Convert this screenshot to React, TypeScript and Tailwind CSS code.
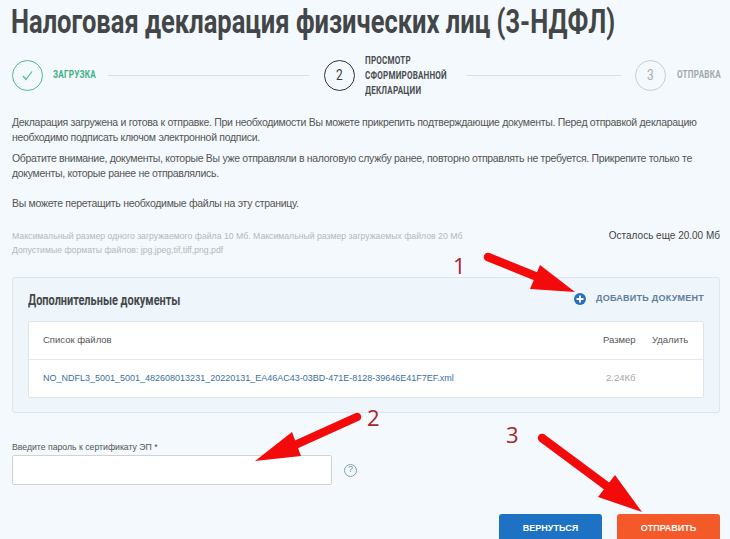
import React from "react";

const cond = "font-['Roboto',sans-serif] origin-left whitespace-nowrap";

function Arrow({ tail, neck, a, b, tip }: { tail: number[]; neck: number[]; a: number[]; b: number[]; tip: number[] }) {
  return (
    <g>
      <line x1={tail[0]} y1={tail[1]} x2={neck[0]} y2={neck[1]} stroke="#f30a0a" strokeWidth="8.5" strokeLinecap="round" />
      <polygon points={`${a[0]},${a[1]} ${tip[0]},${tip[1]} ${b[0]},${b[1]}`} fill="#f30a0a" />
    </g>
  );
}

export default function App() {
  return (
    <div className="relative w-[730px] h-[539px] overflow-hidden bg-[#f3f9fc] font-['Liberation_Sans',Arial,sans-serif] text-[#4b4b4b]">
      <div className="flex flex-col pl-3 pr-[10px]">
        <h1 className={`${cond} h-[44px] -ml-px text-[34px] leading-[42px] font-bold text-[#434648] scale-x-[0.75]`}>
          Налоговая декларация физических лиц (3-НДФЛ)
        </h1>

        <div className="mt-[13px] flex items-center h-[36px] uppercase text-[11px] font-bold">
          <div className="w-[31px] h-[31px] rounded-full border border-[#4fb98c] flex items-center justify-center shrink-0">
            <svg width="13" height="13" viewBox="0 0 13 13" fill="none" stroke="#4fb98c" strokeWidth="1.2"><path d="M2 7l3 3.5L11 2.5" /></svg>
          </div>
          <span className={`${cond} ml-[10px] w-[43px] shrink-0 text-[#3fb083] tracking-[0.3px] scale-x-[0.74]`}>Загрузка</span>
          <div className="ml-[12px] w-[201px] h-px shrink-0 bg-[#d6e0e6]" />
          <div className="ml-[15px] w-[31px] h-[31px] rounded-full border border-[#2e3236] flex items-center justify-center shrink-0 text-[14px] font-normal text-[#3a3d40]">
            <span className={`${cond} origin-center scale-x-[0.85]`}>2</span>
          </div>
          <div className={`${cond} ml-[10px] w-[90px] shrink-0 text-[#4a4d50] leading-[15px] tracking-[0.3px] scale-x-[0.73]`}>
            <div>Просмотр</div>
            <div>сформированной</div>
            <div>декларации</div>
          </div>
          <div className="ml-[11px] w-[155px] h-px shrink-0 bg-[#d6e0e6]" />
          <div className="ml-[14px] w-[31px] h-[31px] rounded-full border border-[#c9cdd0] flex items-center justify-center shrink-0 text-[14px] font-normal text-[#a5a9ac]">
            <span className={`${cond} origin-center scale-x-[0.85]`}>3</span>
          </div>
          <span className={`${cond} ml-[11px] text-[#a5a9ac] tracking-[0.3px] scale-x-[0.74]`}>Отправка</span>
        </div>

        <div className="mt-[22px] text-[10.5px] leading-[15px] text-[#555] tracking-[-0.3px]">
          <p className="w-[700px]">Декларация загружена и готова к отправке. При необходимости Вы можете прикрепить подтверждающие документы. Перед отправкой декларацию необходимо подписать ключом электронной подписи.</p>
          <p className="mt-[6px] w-[700px]">Обратите внимание, документы, которые Вы уже отправляли в налоговую службу ранее, повторно отправлять не требуется. Прикрепите только те документы, которые ранее не отправлялись.</p>
          <p className="mt-[15px]">Вы можете перетащить необходимые файлы на эту страницу.</p>
        </div>

        <div className="mt-[18px] flex justify-between items-start">
          <div className="text-[8.7px] leading-[14px] text-[#b4b8bb]">
            <div>Максимальный размер одного загружаемого файла 10 Мб. Максимальный размер загружаемых файлов 20 Мб</div>
            <div>Допустимые форматы файлов: jpg,jpeg,tif,tiff,png,pdf</div>
          </div>
          <div className="text-[10px] leading-[14px] text-[#444]">Осталось еще 20.00 Мб</div>
        </div>

        <section className="mt-[20px] h-[136px] rounded-[3px] border border-[#dde6ee] bg-[#eef5fb] px-[15px] flex flex-col">
          <div className="h-[43px] flex items-center justify-between">
            <h2 className={`${cond} text-[14.5px] font-bold text-[#45484b] mt-[3px] scale-x-[0.755]`}>Дополнительные документы</h2>
            <div className="flex items-center -mt-[2px]">
              <span className="w-[12px] h-[12px] rounded-full bg-[#2a6fb9] flex items-center justify-center">
                <svg width="8" height="8" viewBox="0 0 8 8" stroke="#fff" strokeWidth="1.8"><path d="M4 0.5v7M0.5 4h7" /></svg>
              </span>
              <span className="ml-[10px] text-[9px] font-bold tracking-[0.25px] uppercase text-[#5f7e9c]">Добавить документ</span>
            </div>
          </div>
          <div className="h-[77px] rounded-[2px] border border-[#dde5ec] bg-white text-[9.5px] flex flex-col">
            <div className="h-[38px] border-b border-[#e4e9ed] flex items-center pl-[14px] text-[#555]">
              <span className="w-[560px]">Список файлов</span>
              <span className="w-[49px]">Размер</span>
              <span>Удалить</span>
            </div>
            <div className="flex-1 flex items-center pl-[14px]">
              <span className="w-[563px] text-[9px] text-[#3b6f9f]">NO_NDFL3_5001_5001_482608013231_20220131_EA46AC43-03BD-471E-8128-39646E41F7EF.xml</span>
              <span className="text-[#a3a7aa]">2.24Кб</span>
            </div>
          </div>
        </section>

        <label className="mt-[28px] text-[8.7px] leading-[12px] text-[#555]">Введите пароль к сертификату ЭП *</label>
        <div className="mt-[2px] flex items-center">
          <div className="w-[320px] h-[30px] rounded-[2px] border border-[#cfd3d6] bg-white" />
          <span className="ml-[12px] w-[13px] h-[13px] rounded-full border border-[#7ea3b8] flex items-center justify-center text-[9px] text-[#6b90a6]">?</span>
        </div>

        <div className="mt-[29px] flex justify-end gap-[15px]">
          <button className="w-[103px] h-[30px] rounded-[3px] bg-[#1e72c4] text-white text-[9px] font-bold uppercase">Вернуться</button>
          <button className="w-[103px] h-[30px] rounded-[3px] bg-[#f4592a] text-white text-[9px] font-bold uppercase">Отправить</button>
        </div>
      </div>

      <svg className="absolute inset-0 pointer-events-none" width="730" height="539">
        <Arrow tail={[488, 257]} neck={[540, 278]} a={[540, 265]} b={[530, 289]} tip={[575, 292]} />
        <Arrow tail={[357, 417]} neck={[295, 445]} a={[292, 432]} b={[301, 456]} tip={[255, 461]} />
        <Arrow tail={[542, 438]} neck={[608, 487]} a={[615, 475]} b={[598, 497]} tip={[642, 512]} />
      </svg>
      <span className="absolute left-[453px] top-[250px] font-['Open_Sans',sans-serif] text-[22px] leading-[30px] text-[#a8262c]">1</span>
      <span className="absolute left-[367px] top-[402px] font-['Open_Sans',sans-serif] text-[22px] leading-[30px] text-[#a8262c]">2</span>
      <span className="absolute left-[506px] top-[419px] font-['Open_Sans',sans-serif] text-[22px] leading-[30px] text-[#a8262c]">3</span>
    </div>
  );
}
